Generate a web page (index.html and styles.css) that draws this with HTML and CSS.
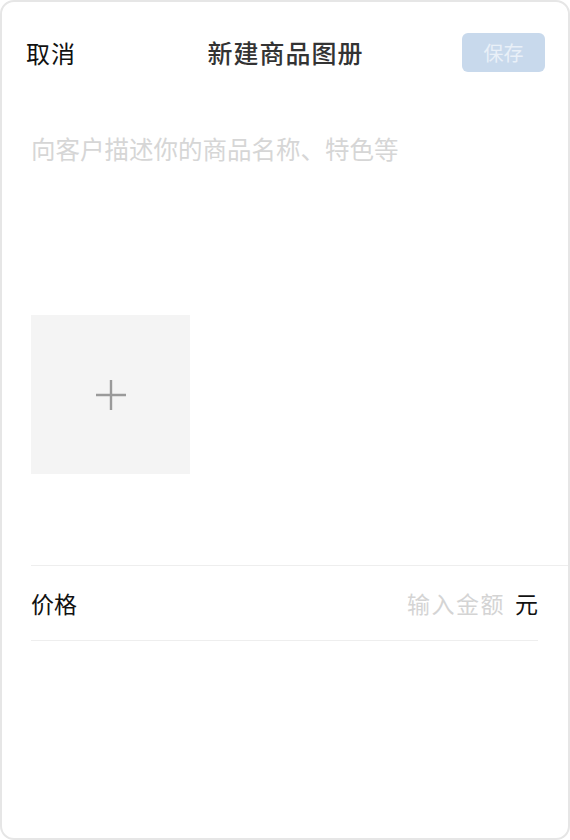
FILE: index.html
```html
<!DOCTYPE html>
<html lang="zh">
<head>
<meta charset="utf-8">
<title>新建商品图册</title>
<link rel="stylesheet" href="styles.css">
</head>
<body>
<div class="frame">
  <header class="header">
    <span class="cancel">取消</span>
    <span class="title">新建商品图册</span>
    <span class="save-wrap"><button class="save">保存</button></span>
  </header>
  <div class="desc">向客户描述你的商品名称、特色等</div>
  <div class="upload">
    <svg class="plus" width="32" height="32" viewBox="0 0 32 32">
      <path d="M16 1V31M1 16H31" stroke="#9a9a9a" stroke-width="2.4" fill="none"/>
    </svg>
  </div>
  <div class="form">
    <div class="row">
      <span class="label">价格</span>
      <span class="input">输入金额</span>
      <span class="unit">元</span>
    </div>
  </div>
</div>
</body>
</html>
```

FILE: styles.css
```css
* { box-sizing: border-box; }
html, body { margin: 0; padding: 0; background: #fff; }
body {
  font-family: "Noto Sans CJK SC", "Noto Sans", sans-serif;
  color: #222;
}
.frame {
  width: 570px;
  height: 840px;
  border: 2px solid #e6e6e6;
  border-radius: 14px;
  overflow: hidden;
  background: #fff;
}
.header {
  display: grid;
  grid-template-columns: 1fr auto 1fr;
  align-items: center;
  height: 39px;
  margin-top: 31px;
  padding: 0 23px 0 24px;
}
.cancel {
  font-size: 24px;
  color: #111;
  line-height: 1;
  letter-spacing: 1px;
}
.title {
  font-size: 25px;
  font-weight: 500;
  color: #333;
  line-height: 1;
  letter-spacing: 1px;
}
.save-wrap { display: flex; justify-content: flex-end; }
.save {
  width: 83px;
  height: 39px;
  border: none;
  border-radius: 6px;
  background: #c8d9ec;
  color: #e9f0f8;
  font-family: inherit;
  font-size: 20px;
  padding: 0;
}
.desc {
  margin: 59px 0 0 29px;
  font-size: 24.5px;
  line-height: 36px;
  color: #d6d6d6;
  letter-spacing: 0;
}
.upload {
  margin: 148px 0 0 29px;
  width: 159px;
  height: 159px;
  background: #f4f4f4;
  display: flex;
  align-items: center;
  justify-content: center;
}
.form {
  margin: 91px 0 0 29px;
  border-top: 1.5px solid #eeeeee;
}
.row {
  display: flex;
  align-items: center;
  height: 75px;
  margin-right: 30px;
  border-bottom: 1.5px solid #eeeeee;
}
.label {
  font-size: 23px;
  color: #111;
  flex: 1;
}
.input {
  font-size: 23px;
  color: #d4d4d4;
  letter-spacing: 1.5px;
}
.unit {
  font-size: 23px;
  color: #111;
  margin-left: 10px;
}
```
